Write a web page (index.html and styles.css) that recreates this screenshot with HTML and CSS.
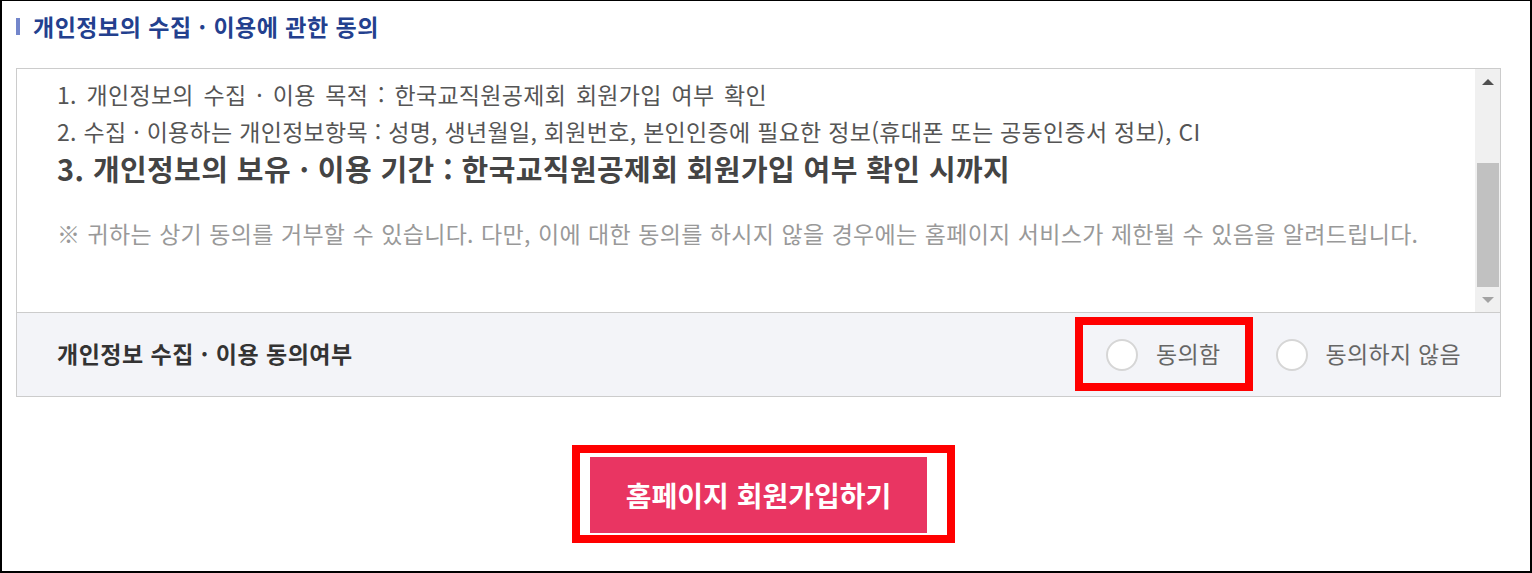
FILE: index.html
```html
<!DOCTYPE html>
<html lang="ko">
<head>
  <meta charset="UTF-8">
  <title>개인정보 수집 · 이용 동의</title>
  <link rel="stylesheet" href="styles.css">
</head>
<body>
  <div class="frame">
    <h2 class="title">개인정보의 수집 · 이용에 관한 동의</h2>

    <div class="agree-box">
      <div class="terms">
        <div class="terms-text">
          <p class="wide">1. 개인정보의 수집 · 이용 목적 : 한국교직원공제회 회원가입 여부 확인</p>
          <p>2. 수집 · 이용하는 개인정보항목 : 성명, 생년월일, 회원번호, 본인인증에 필요한 정보(휴대폰 또는 공동인증서 정보), CI</p>
          <p class="strong">3. 개인정보의 보유 · 이용 기간 : 한국교직원공제회 회원가입 여부 확인 시까지</p>
          <p class="note">※ 귀하는 상기 동의를 거부할 수 있습니다. 다만, 이에 대한 동의를 하시지 않을 경우에는 홈페이지 서비스가 제한될 수 있음을 알려드립니다.</p>
        </div>
        <div class="scrollbar">
          <div class="arrow up"></div>
          <div class="track"><div class="thumb"></div></div>
          <div class="arrow down"></div>
        </div>
      </div>

      <div class="agree-row">
        <div class="agree-label">개인정보 수집 · 이용 동의여부</div>
        <div class="options">
          <label class="opt">
            <span class="radio"></span>동의함
            <span class="mark mark-opt"></span>
          </label>
          <label class="opt">
            <span class="radio"></span>동의하지 않음
          </label>
        </div>
      </div>
    </div>

    <div class="btn-wrap">
      <button class="join-btn">홈페이지 회원가입하기<span class="mark mark-btn"></span></button>
    </div>
  </div>
</body>
</html>
```

FILE: styles.css
```css
* {
  box-sizing: border-box;
}

body {
  margin: 0;
  font-family: "Noto Sans CJK KR", "Noto Sans", sans-serif;
  background: #fff;
}

.frame {
  height: 573px;
  border: 2px solid #000;
  border-top-width: 1px;
  padding-left: 14px;
}

.title {
  position: relative;
  margin: 9px 0 0;
  padding-left: 17px;
  height: 32px;
  line-height: 32px;
  font-size: 23px;
  font-weight: bold;
  letter-spacing: 0.5px;
  color: #23408e;
}

.title::before {
  content: "";
  position: absolute;
  left: 0;
  top: 8px;
  width: 4px;
  height: 17px;
  background: #7386cb;
}

.agree-box {
  width: 1485px;
  margin-top: 26px;
  border: 1px solid #ccc;
}

.terms {
  display: flex;
  height: 243px;
  background: #fff;
}

.terms-text {
  flex: 1;
  padding: 7px 0 0 40px;
  font-size: 23px;
  letter-spacing: 0.3px;
  color: #555;
}

.terms-text p {
  margin: 0;
  line-height: 37px;
  white-space: nowrap;
}

.terms-text .wide {
  word-spacing: 3px;
}

.terms-text .strong {
  font-size: 29px;
  font-weight: bold;
  letter-spacing: 0.4px;
  color: #444;
}

.terms-text .note {
  margin-top: 28px;
  word-spacing: 0.5px;
  color: #999;
}

.scrollbar {
  width: 25px;
  display: flex;
  flex-direction: column;
  background: #f0f0f0;
}

.arrow {
  height: 25px;
  display: flex;
  justify-content: center;
  align-items: center;
}

.arrow::before {
  content: "";
  border-left: 6px solid transparent;
  border-right: 6px solid transparent;
}

.arrow.up::before {
  border-bottom: 6px solid #505050;
}

.arrow.down::before {
  border-top: 6px solid #a3a3a3;
}

.track {
  flex: 1;
  display: flex;
  flex-direction: column;
  justify-content: flex-end;
  padding: 0 1px 0 2px;
}

.thumb {
  height: 124px;
  background: #c1c1c1;
}

.agree-row {
  display: flex;
  align-items: center;
  justify-content: space-between;
  height: 84px;
  padding: 0 39px 4px 40px;
  border-top: 1px solid #ccc;
  background: #f3f4f8;
}

.agree-label {
  font-size: 23px;
  font-weight: bold;
  letter-spacing: 0.5px;
  color: #333;
}

.options {
  display: flex;
  gap: 55px;
}

.opt {
  position: relative;
  display: flex;
  align-items: center;
  gap: 18px;
  font-size: 23px;
  letter-spacing: 0.3px;
  color: #666;
}

.radio {
  width: 32px;
  height: 32px;
  margin-top: 4px;
  border: 2px solid #d6d6d6;
  border-radius: 50%;
  background: #fff;
}

.mark {
  position: absolute;
  border: 8px solid #ff0000;
  pointer-events: none;
}

.mark-opt {
  top: -18px;
  bottom: -20px;
  left: -31px;
  right: -32px;
}

.btn-wrap {
  width: 1485px;
  display: flex;
  justify-content: center;
  margin-top: 60px;
}

.join-btn {
  position: relative;
  width: 337px;
  height: 76px;
  border: none;
  background: #e93562;
  color: #fff;
  font-family: inherit;
  font-size: 28px;
  font-weight: bold;
}

.mark-btn {
  top: -12px;
  bottom: -10px;
  left: -18px;
  right: -28px;
}
```
